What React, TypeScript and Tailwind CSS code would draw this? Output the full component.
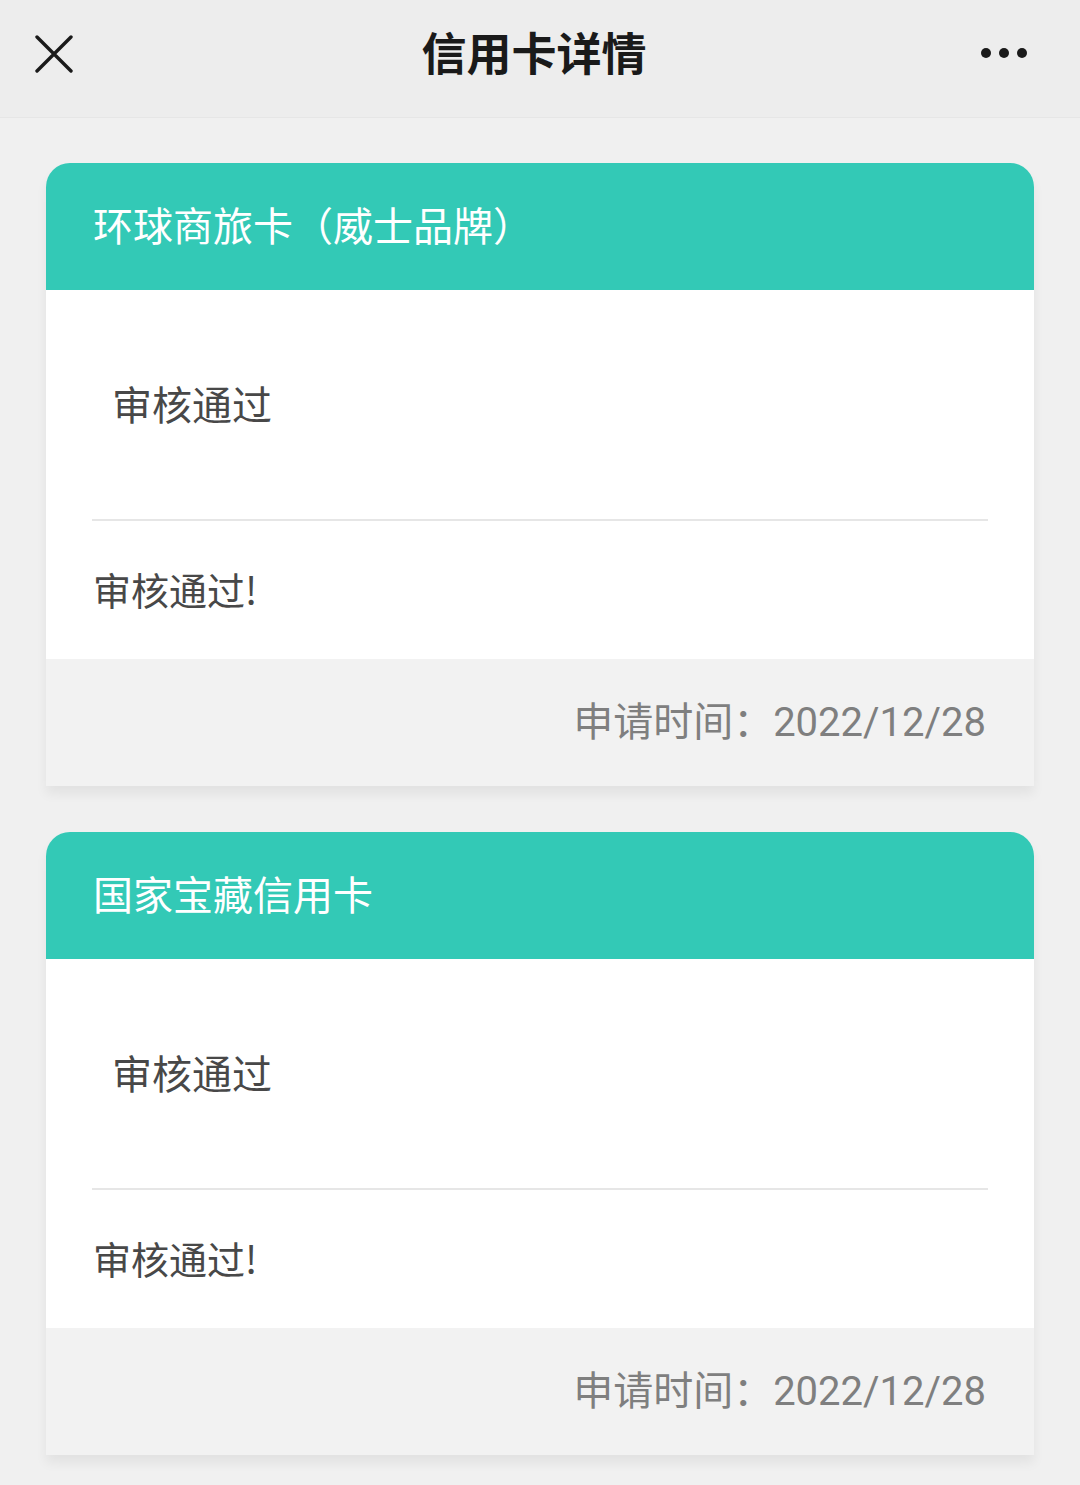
const cards = [
  { title: "环球商旅卡（威士品牌）", status: "审核通过", note: "审核通过!", date: "2022/12/28" },
  { title: "国家宝藏信用卡", status: "审核通过", note: "审核通过!", date: "2022/12/28" },
];

function Card({ title, status, note, date }: { title: string; status: string; note: string; date: string }) {
  return (
    <div className="rounded-t-[24px] overflow-hidden shadow-[0_8px_12px_rgba(0,0,0,0.06)]">
      <div className="h-[127px] bg-[#33c9b6] flex items-center pl-[47px] pb-[6px] text-[40px] text-white">{title}</div>
      <div className="bg-white px-[46px]">
        <div className="h-[229px] flex items-center pl-[20px] pb-[4px] text-[40px] text-[#484848]">{status}</div>
        <div className="h-[2px] bg-[#e6e6e6]" />
        <div className="h-[138px] flex items-center pl-[1px] pb-[4px] text-[38px] text-[#484848]">{note}</div>
      </div>
      <div
        className="h-[127px] bg-[#f2f2f2] flex items-center justify-end pr-[48px] text-[40px] text-[#7f7f7f]"
        style={{ fontFamily: 'Roboto, "Noto Sans CJK SC", sans-serif' }}
      >
        申请时间：{date}
      </div>
    </div>
  );
}

export default function App() {
  return (
    <div className="min-h-[1485px] bg-[#f0f0f0]" style={{ fontFamily: '"Noto Sans CJK SC", "Noto Sans", sans-serif' }}>
      <div className="h-[118px] bg-[#ededed] border-b border-[#e6e6e6] flex items-center justify-between pl-[35px] pr-[52px] relative">
        <svg width="38" height="38" viewBox="0 0 38 38" className="mt-[-10px]">
          <path d="M2 2 L36 36 M36 2 L2 36" stroke="#1a1a1a" strokeWidth="3.4" strokeLinecap="round" />
        </svg>
        <div className="absolute left-0 right-0 top-0 h-[104px] flex items-center justify-center pr-[12px] text-[45px] font-semibold text-[#1a1a1a] pointer-events-none">
          信用卡详情
        </div>
        <svg width="48" height="12" viewBox="0 0 48 12" className="mt-[-12px]">
          <circle cx="6" cy="6" r="5" fill="#1a1a1a" />
          <circle cx="24" cy="6" r="5" fill="#1a1a1a" />
          <circle cx="42" cy="6" r="5" fill="#1a1a1a" />
        </svg>
      </div>
      <div className="px-[46px] pt-[45px] flex flex-col gap-[46px]">
        {cards.map((c, i) => (
          <Card key={i} {...c} />
        ))}
      </div>
    </div>
  );
}
